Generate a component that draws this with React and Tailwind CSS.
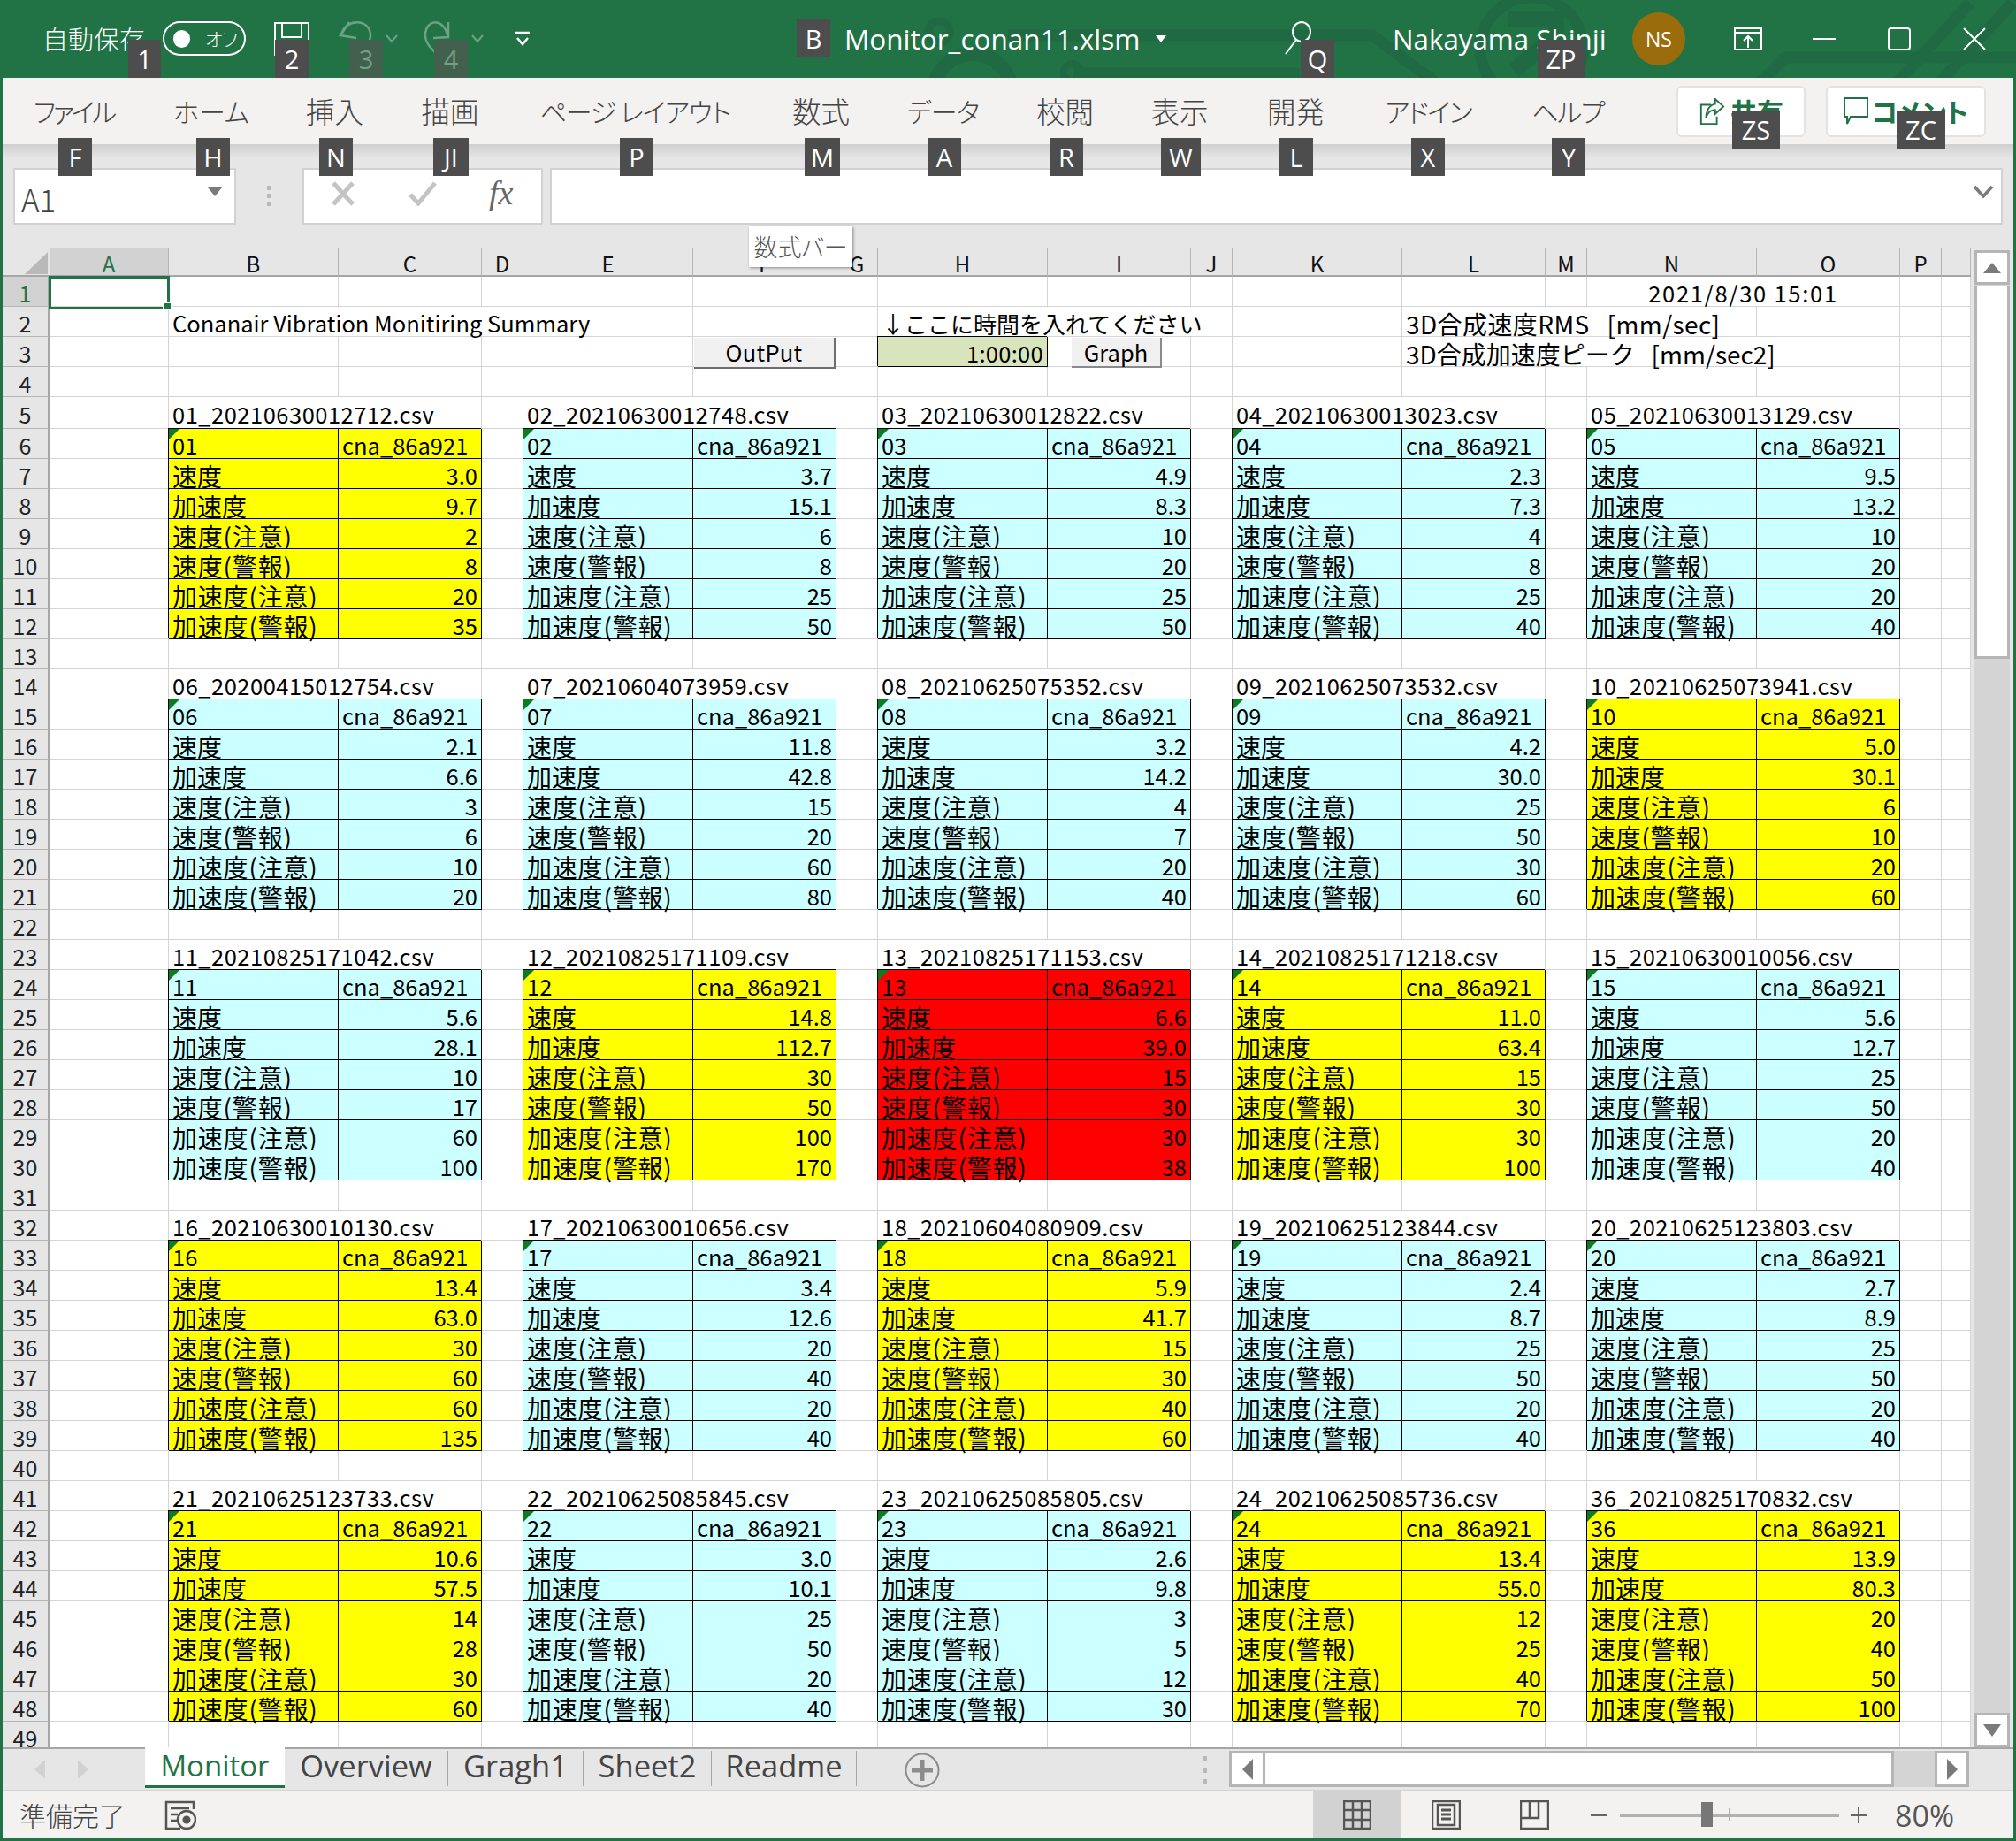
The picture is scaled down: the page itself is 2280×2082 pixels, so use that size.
import React from "react";

const JP = "font-['Noto_Sans_CJK_JP',sans-serif]";
const UI = "font-['Open_Sans','Noto_Sans_CJK_JP',sans-serif]";

const blocks = [
  [5, [
    ["01_20210630012712.csv", "y", ["3.0", "9.7", "2", "8", "20", "35"]],
    ["02_20210630012748.csv", "c", ["3.7", "15.1", "6", "8", "25", "50"]],
    ["03_20210630012822.csv", "c", ["4.9", "8.3", "10", "20", "25", "50"]],
    ["04_20210630013023.csv", "c", ["2.3", "7.3", "4", "8", "25", "40"]],
    ["05_20210630013129.csv", "c", ["9.5", "13.2", "10", "20", "20", "40"]],
  ]],
  [14, [
    ["06_20200415012754.csv", "c", ["2.1", "6.6", "3", "6", "10", "20"]],
    ["07_20210604073959.csv", "c", ["11.8", "42.8", "15", "20", "60", "80"]],
    ["08_20210625075352.csv", "c", ["3.2", "14.2", "4", "7", "20", "40"]],
    ["09_20210625073532.csv", "c", ["4.2", "30.0", "25", "50", "30", "60"]],
    ["10_20210625073941.csv", "y", ["5.0", "30.1", "6", "10", "20", "60"]],
  ]],
  [23, [
    ["11_20210825171042.csv", "c", ["5.6", "28.1", "10", "17", "60", "100"]],
    ["12_20210825171109.csv", "y", ["14.8", "112.7", "30", "50", "100", "170"]],
    ["13_20210825171153.csv", "r", ["6.6", "39.0", "15", "30", "30", "38"]],
    ["14_20210825171218.csv", "y", ["11.0", "63.4", "15", "30", "30", "100"]],
    ["15_20210630010056.csv", "c", ["5.6", "12.7", "25", "50", "20", "40"]],
  ]],
  [32, [
    ["16_20210630010130.csv", "y", ["13.4", "63.0", "30", "60", "60", "135"]],
    ["17_20210630010656.csv", "c", ["3.4", "12.6", "20", "40", "20", "40"]],
    ["18_20210604080909.csv", "y", ["5.9", "41.7", "15", "30", "40", "60"]],
    ["19_20210625123844.csv", "c", ["2.4", "8.7", "25", "50", "20", "40"]],
    ["20_20210625123803.csv", "c", ["2.7", "8.9", "25", "50", "20", "40"]],
  ]],
  [41, [
    ["21_20210625123733.csv", "y", ["10.6", "57.5", "14", "28", "30", "60"]],
    ["22_20210625085845.csv", "c", ["3.0", "10.1", "25", "50", "20", "40"]],
    ["23_20210625085805.csv", "c", ["2.6", "9.8", "3", "5", "12", "30"]],
    ["24_20210625085736.csv", "y", ["13.4", "55.0", "12", "25", "40", "70"]],
    ["36_20210825170832.csv", "y", ["13.9", "80.3", "20", "40", "50", "100"]],
  ]],
];

const LABELS = ["速度", "加速度", "速度(注意)", "速度(警報)", "加速度(注意)", "加速度(警報)"];
const COLS = "ABCDEFGHIJKLMNOP ".split("");
const FILL = { y: "bg-[#ffff00]", c: "bg-[#ccffff]", r: "bg-[#ff0000]" };
const SPAN = { 2: "col-span-2", 3: "col-span-3", 4: "col-span-4" };

function buildCells() {
  const m = {};
  const put = (r, c, v) => (m[r + "," + c] = v);
  put(1, 13, { t: "2021/8/30 15:01", span: 2, kind: "date" });
  put(2, 1, { t: "Conanair Vibration Monitiring Summary", span: 4, kind: "text" });
  put(2, 7, { t: "↓ここに時間を入れてください", span: 3, kind: "label" });
  put(2, 11, { t: "3D合成速度RMS   [mm/sec]", span: 3, kind: "note2" });
  put(3, 11, { t: "3D合成加速度ピーク   [mm/sec2]", span: 4, kind: "note" });
  put(3, 7, { t: "1:00:00", kind: "time" });
  blocks.forEach(([row, tables]) => {
    tables.forEach(([file, color, vals], i) => {
      const c = 1 + i * 3;
      put(row, c, { t: file, span: 2, kind: "file" });
      put(row + 1, c, { t: file.slice(0, 2), kind: "head", fill: color });
      put(row + 1, c + 1, { t: "cna_86a921", kind: "sub", fill: color });
      vals.forEach((v, j) => {
        put(row + 2 + j, c, { t: LABELS[j], kind: j > 1 ? "tlabelp" : "tlabel", fill: color });
        put(row + 2 + j, c + 1, { t: v, kind: "num", fill: color });
      });
    });
  });
  return m;
}

function Cell({ cell }) {
  const base = "min-w-0 whitespace-nowrap border-r border-b ";
  const span = cell.span ? SPAN[cell.span] + " " : "";
  const boxed = "border-black shadow-[-1px_-1px_0_#000] " + (cell.fill ? FILL[cell.fill] : "") + " ";
  switch (cell.kind) {
    case "date":
      return <div className={base + span + "border-[#d4d4d4] flex items-center justify-center pt-1 text-[25.5px] tracking-[1.75px] text-black"}>{cell.t}</div>;
    case "text":
      return <div className={base + span + "border-[#d4d4d4] flex items-center pl-[4px] pt-1 text-[25.5px] text-black"}>{cell.t}</div>;
    case "file":
      return <div className={base + span + "border-[#d4d4d4] flex items-center pl-[4px] pt-1 text-[25.5px] tracking-[0.5px] text-black"}>{cell.t}</div>;
    case "label":
      return <div className={base + span + "border-[#d4d4d4] flex items-center pl-[4px] pt-1 text-[26px] text-black"}>{cell.t}</div>;
    case "note":
      return <div className={base + span + "border-[#d4d4d4] flex items-center pl-[4px] pt-1 text-[28px] whitespace-pre text-black"}>{cell.t}</div>;
    case "note2":
      return <div className={base + span + "border-[#d4d4d4] flex items-center pl-[4px] pt-1 text-[28px] tracking-[0.4px] whitespace-pre text-black"}>{cell.t}</div>;
    case "time":
      return <div className={base + "border-black shadow-[-1px_-1px_0_#000] bg-[#d8e4bc] flex items-center justify-end pr-[4px] pt-1 text-[25.5px] tracking-[0.3px] text-black"}>{cell.t}</div>;
    case "head":
      return (
        <div className={base + boxed + "relative flex items-center pl-[4px] pt-1 text-[25.5px] text-black"}>
          <span className="absolute left-0 top-0 w-3 h-3 bg-[#0b7d20] [clip-path:polygon(0_0,100%_0,0_100%)]" />
          {cell.t}
        </div>
      );
    case "sub":
      return <div className={base + boxed + "flex items-center pl-[4px] pt-1 text-[25.5px] text-black"}>{cell.t}</div>;
    case "tlabel":
      return <div className={base + boxed + "flex items-center pl-[4px] pt-1 text-[28px] text-black"}>{cell.t}</div>;
    case "tlabelp":
      return <div className={base + boxed + "flex items-center pl-[4px] pt-1 text-[28px] tracking-[0.8px] text-black"}>{cell.t}</div>;
    default:
      return <div className={base + boxed + "flex items-center justify-end pr-[4px] pt-1 text-[25.5px] text-black"}>{cell.t}</div>;
  }
}

function Sheet() {
  const m = buildCells();
  const out = [];
  out.push(
    <div key="corner" className="bg-[#e6e6e6] border-b-2 border-[#a6a6a6] relative">
      <span className="absolute left-[25px] top-[5px] w-[26px] h-[25px] bg-[#b9b9b9] [clip-path:polygon(100%_0,100%_100%,0_100%)]" />
    </div>
  );
  COLS.forEach((c, i) =>
    out.push(
      <div
        key={"h" + i}
        className={
          "border-b-2 border-r border-r-[#b5b5b5] border-b-[#a6a6a6] flex items-center justify-center text-[24px] leading-none pt-1 " +
          (i === 0 ? "bg-[#d2d2d2] text-[#217346]" : "bg-[#e6e6e6] text-[#111]")
        }
      >
        {c}
      </div>
    )
  );
  for (let r = 1; r <= 49; r++) {
    out.push(
      <div
        key={"r" + r}
        className={
          "border-b border-r-2 border-r-[#a6a6a6] border-b-[#b5b5b5] flex items-center justify-center text-[25px] leading-none pt-1 " +
          (r === 1 ? "bg-[#d2d2d2] text-[#217346]" : "bg-[#e6e6e6] text-[#222]")
        }
      >
        {r}
      </div>
    );
    let c = 0;
    while (c < COLS.length) {
      const cell = m[r + "," + c];
      if (cell) {
        out.push(<Cell key={r + "-" + c} cell={cell} />);
        c += cell.span || 1;
      } else {
        out.push(<div key={r + "-" + c} className="border-r border-b border-[#d4d4d4]" />);
        c += 1;
      }
    }
  }
  return (
    <div className={"relative w-[2226px] h-[1696px] overflow-hidden bg-white " + JP}>
      <div className="grid grid-cols-[53px_135px_repeat(5,192px_162px_47px)_33px] grid-rows-[33px_repeat(4,34px)_36px_repeat(44,34px)]">
        {out}
      </div>
      {/* form controls floating over the sheet */}
      <div className="absolute left-[782px] top-[102px] w-[160px] h-[35px] bg-[#f0f0f0] border-r-2 border-b-2 border-[#6e6e6e] flex items-center justify-center text-[25.5px] tracking-[0.3px] text-black">OutPut</div>
      <div className="absolute left-[1209px] top-[102px] w-[102px] h-[34px] bg-[#f0f0f0] border-r-2 border-b-2 border-[#8a8a8a] flex items-center justify-center text-[25.5px] text-black">Graph</div>
      {/* active cell */}
      <div className="absolute left-[52px] top-[32px] w-[137px] h-[38px] border-[3px] border-[#217346]" />
      <div className="absolute left-[181px] top-[62px] w-[10px] h-[9px] bg-[#217346] border border-white" />
    </div>
  );
}

const KEYTIPS = [
  ["1", "left-[145px] top-[45px] w-[37px] h-[43px]"],
  ["2", "left-[311px] top-[45px] w-[38px] h-[43px]"],
  ["B", "left-[901px] top-[22px] w-[38px] h-[43px]"],
  ["Q", "left-[1471px] top-[45px] w-[38px] h-[43px]"],
  ["ZP", "left-[1739px] top-[45px] w-[53px] h-[43px]"],
  ["F", "left-[66px] top-[156px] w-[38px] h-[43px]"],
  ["H", "left-[222px] top-[156px] w-[38px] h-[43px]"],
  ["N", "left-[361px] top-[156px] w-[38px] h-[43px]"],
  ["JI", "left-[490px] top-[156px] w-[40px] h-[43px]"],
  ["P", "left-[701px] top-[156px] w-[38px] h-[43px]"],
  ["M", "left-[910px] top-[156px] w-[40px] h-[43px]"],
  ["A", "left-[1049px] top-[156px] w-[38px] h-[43px]"],
  ["R", "left-[1187px] top-[156px] w-[38px] h-[43px]"],
  ["W", "left-[1313px] top-[156px] w-[45px] h-[43px]"],
  ["L", "left-[1447px] top-[156px] w-[38px] h-[43px]"],
  ["X", "left-[1596px] top-[156px] w-[38px] h-[43px]"],
  ["Y", "left-[1755px] top-[156px] w-[38px] h-[43px]"],
  ["ZS", "left-[1959px] top-[125px] w-[54px] h-[43px]"],
  ["ZC", "left-[2145px] top-[125px] w-[55px] h-[43px]"],
];

const RIBBON = [
  ["ファイル", "ml-[35px] w-[91px] text-[30px] tracking-[-3.2px]"],
  ["ホーム", "ml-[69px] w-[82px] text-[30px]"],
  ["挿入", "ml-[66px] w-[65px] text-[32.5px]"],
  ["描画", "ml-[65px] w-[66px] text-[32.5px]"],
  ["ページ レイアウト", "ml-[70px] w-[213px] text-[30px] tracking-[-1.2px]"],
  ["数式", "ml-[71px] w-[65px] text-[32.5px]"],
  ["データ", "ml-[66px] w-[79px] text-[30px] tracking-[-0.8px]"],
  ["校閲", "ml-[66px] w-[65px] text-[32.5px]"],
  ["表示", "ml-[64px] w-[66px] text-[32.5px]"],
  ["開発", "ml-[66px] w-[65px] text-[32.5px]"],
  ["アドイン", "ml-[69px] w-[96px] text-[30px] tracking-[-1.8px]"],
  ["ヘルプ", "ml-[70px] w-[80px] text-[30px] tracking-[-1.5px]"],
];

function TitleBackdrop() {
  return (
    <svg className="absolute inset-0" width="2280" height="88" viewBox="0 0 2280 88" fill="none" stroke="#1f6a42" strokeWidth="13">
      <path d="M1140 40H1552L1622 92" />
      <path d="M1213 83H1470" />
      <circle cx="1213" cy="82" r="10" strokeWidth="8" />
      <circle cx="1732" cy="55" r="58" />
      <path d="M1705 22H1760V40L1712 80" strokeWidth="18" />
      <path d="M1992 92L2019 65H2280" />
      <path d="M2228 3L2147 92M2276 3L2195 92" />
      <circle cx="1100" cy="105" r="44" strokeWidth="16" />
      <circle cx="1062" cy="36" r="12" strokeWidth="9" />
    </svg>
  );
}

function TitleBar() {
  return (
    <div className={"relative h-[88px] shrink-0 bg-[#217346] flex items-center text-white overflow-hidden " + UI}>
      <TitleBackdrop />
      <div className="relative flex items-center pl-[48px] h-full">
        <div className="w-[136px] text-[29px] whitespace-nowrap font-['Noto_Sans_CJK_JP',sans-serif] font-light">自動保存</div>
        <div className="w-[94px] h-[39px] rounded-full border-2 border-white flex items-center pl-[10px] mb-[1px]">
          <span className="w-[19px] h-[20px] rounded-full bg-white" />
          <span className="ml-[17px] text-[21px] font-['Noto_Sans_CJK_JP',sans-serif] font-light [font-feature-settings:'palt']">オフ</span>
        </div>
        <svg className="ml-[32px]" width="40" height="40" viewBox="0 0 40 40" fill="none" stroke="#fff" strokeWidth="2">
          <path d="M1 2H39V38H1Z" />
          <path d="M9 2V18H31V2" />
        </svg>
        <svg className="ml-[33px]" width="38" height="44" viewBox="0 0 38 44" fill="none" stroke="#6ea285" strokeWidth="2.5">
          <path d="M12 3L2 18L20 21" />
          <path d="M3 17C8 -2 36 -1 36 18C36 30 22 38 14 46" />
        </svg>
        <svg className="ml-[15px]" width="14" height="10" viewBox="0 0 14 10" fill="none" stroke="#6ea285" strokeWidth="2"><path d="M1 1L7 8L13 1" /></svg>
        <svg className="ml-[30px]" width="38" height="44" viewBox="0 0 38 44" fill="none" stroke="#6ea285" strokeWidth="2.5">
          <path d="M27 3V20L10 21" />
          <path d="M26 18C22 -2 1 -1 1 18C1 30 14 38 22 46" />
        </svg>
        <svg className="ml-[15px]" width="14" height="10" viewBox="0 0 14 10" fill="none" stroke="#6ea285" strokeWidth="2"><path d="M1 1L7 8L13 1" /></svg>
        <svg className="ml-[36px]" width="16" height="18" viewBox="0 0 16 18" fill="none" stroke="#fff" strokeWidth="2.5">
          <path d="M0 2H16" />
          <path d="M2 8L8 15L14 8" />
        </svg>
        <div className="ml-[356px] w-[345px] text-[31.5px] whitespace-nowrap">Monitor_conan11.xlsm</div>
        <svg className="ml-[7px]" width="12" height="8" viewBox="0 0 12 8"><path d="M0 0H12L6 8Z" fill="#fff" /></svg>
        <svg className="ml-[134px] -mt-[2px]" width="30" height="38" viewBox="0 0 30 38" fill="none" stroke="#fff" strokeWidth="2">
          <ellipse cx="19" cy="12" rx="10" ry="11" />
          <path d="M13 21L1 37" />
        </svg>
        <div className="ml-[92px] w-[260px] text-[31.3px] whitespace-nowrap">Nakayama Shinji</div>
        <div className="ml-[11px] w-[60px] h-[60px] rounded-full bg-[#9a6c0b] flex items-center justify-center text-[23px]">NS</div>
        <svg className="ml-[55px]" width="32" height="26" viewBox="0 0 32 26" fill="none" stroke="#fff" strokeWidth="2">
          <path d="M1 1H31V25H1Z" />
          <path d="M1 6H31" />
          <path d="M16 23V11M11 15L16 10L21 15" />
        </svg>
        <svg className="ml-[57px]" width="26" height="4" viewBox="0 0 26 4"><path d="M0 2H26" stroke="#fff" strokeWidth="2" /></svg>
        <svg className="ml-[59px]" width="26" height="26" viewBox="0 0 26 26" fill="none" stroke="#fff" strokeWidth="2"><rect x="1" y="1" width="24" height="24" rx="3" /></svg>
        <svg className="ml-[59px]" width="26" height="26" viewBox="0 0 26 26" fill="none" stroke="#fff" strokeWidth="2"><path d="M1 1L25 25M25 1L1 25" /></svg>
      </div>
    </div>
  );
}

function RibbonTabs() {
  return (
    <div className={"h-[75px] shrink-0 bg-[#f3f2f1] flex items-center text-[#444] " + JP}>
      {RIBBON.map(([t, c]) => (
        <div key={t} className={c + " flex justify-center whitespace-nowrap font-light [font-feature-settings:'palt']"}>{t}</div>
      ))}
      <div className="ml-[83px] w-[146px] h-[58px] bg-white border-2 border-[#e3e3e3] rounded-md flex items-center justify-center gap-[6px] text-[#217346] text-[30px] font-bold">
        <svg width="30" height="30" viewBox="0 0 30 32" fill="none" stroke="#217346" strokeWidth="2">
          <path d="M14 8H2V31H21V22" />
          <path d="M19 1L29 10L19 19V14C13 14 10 17 8 24C8 15 12 8 19 7Z" />
        </svg>
        <span>共有</span>
      </div>
      <div className="ml-[23px] w-[181px] h-[58px] bg-white border-2 border-[#e3e3e3] rounded-md flex items-center justify-center gap-[4px] text-[#217346] text-[30px] font-bold [font-feature-settings:'palt']">
        <svg width="28" height="32" viewBox="0 0 28 32" fill="none" stroke="#217346" strokeWidth="2">
          <path d="M1 1H27V22H8L4 30V22H1Z" />
        </svg>
        <span>コメント</span>
      </div>
    </div>
  );
}

function FormulaBar() {
  return (
    <div className={"relative h-[117px] shrink-0 bg-[#e6e6e6] flex pt-[27px] pl-[12px] " + JP}>
      <div className="absolute left-0 right-0 top-0 h-[16px] bg-gradient-to-b from-[#cfcfcf] to-[#e6e6e6]" />
      <div className="relative w-[252px] h-[64px] bg-white border-2 border-[#d2d2d2] flex items-center justify-between pl-[7px] pr-[14px] text-[#444] text-[35px] font-light">
        <span className="mt-[6px]">A1</span>
        <svg width="16" height="10" viewBox="0 0 16 10" className="-mt-[10px]"><path d="M0 0H16L8 10Z" fill="#7a7a7a" /></svg>
      </div>
      <div className="relative w-[75px] h-[64px] flex items-center justify-center">
        <svg width="6" height="24" viewBox="0 0 6 24" fill="#b8b8b8"><rect x="0" width="5" height="5" /><rect x="0" y="9" width="5" height="5" /><rect x="0" y="18" width="5" height="5" /></svg>
      </div>
      <div className="relative w-[272px] h-[64px] bg-white border-2 border-[#d2d2d2] flex items-center">
        <svg className="ml-[30px] -mt-[6px]" width="28" height="30" viewBox="0 0 28 30" fill="none" stroke="#c4c4c4" strokeWidth="5"><path d="M3 3L25 27M25 3L3 27" /></svg>
        <svg className="ml-[60px] -mt-[6px]" width="32" height="28" viewBox="0 0 32 28" fill="none" stroke="#c4c4c4" strokeWidth="5"><path d="M2 15L11 25L30 2" /></svg>
        <span className="ml-[59px] -mt-[8px] font-['Liberation_Serif',serif] italic text-[38px] text-[#666] leading-none">fx</span>
      </div>
      <div className="relative ml-[8px] w-[1643px] h-[64px] bg-white border-2 border-[#d2d2d2] flex items-center justify-end pr-[8px]">
        <svg width="24" height="16" viewBox="0 0 24 16" fill="none" stroke="#7a7a7a" strokeWidth="3.5" className="-mt-[10px]"><path d="M2 2L12 13L22 2" /></svg>
      </div>
    </div>
  );
}

function VScroll() {
  return (
    <div className="w-[48px] h-[1696px] bg-[#e6e6e6] flex flex-col pt-[3px] pl-[4px] pr-[4px]">
      <div className="h-[39px] bg-white border-[3px] border-[#b5b5b5] flex items-center justify-center">
        <svg width="20" height="12" viewBox="0 0 20 12"><path d="M10 0L20 12H0Z" fill="#7a7a7a" /></svg>
      </div>
      <div className="flex-1 bg-[#d4d4d4] pt-[2px]">
        <div className="h-[421px] bg-white border-x-[3px] border-b-[3px] border-[#b5b5b5]" />
      </div>
      <div className="h-[39px] bg-white border-[3px] border-[#b5b5b5] flex items-center justify-center">
        <svg width="20" height="14" viewBox="0 0 20 14"><path d="M10 14L20 0H0Z" fill="#7a7a7a" /></svg>
      </div>
    </div>
  );
}

function TabBar() {
  const tabs = [
    ["Overview", "w-[185px]"],
    ["Gragh1", "w-[153px]"],
    ["Sheet2", "w-[145px]"],
    ["Readme", "w-[164px]"],
  ];
  return (
    <div className={"h-[48px] shrink-0 bg-[#e6e6e6] border-t-2 border-[#a6a6a6] flex " + UI}>
      <div className="w-[161px] flex items-center pl-[36px] gap-[37px]">
        <svg width="12" height="22" viewBox="0 0 12 22"><path d="M12 0V22L0 11Z" fill="#d2d2d2" /></svg>
        <svg width="12" height="22" viewBox="0 0 12 22"><path d="M0 0V22L12 11Z" fill="#d2d2d2" /></svg>
      </div>
      <div className="w-[158px] -mt-[2px] h-[46px] bg-white border-b-[3px] border-[#217346] flex items-center justify-center text-[#217346] text-[33px] leading-none pb-[3px]">Monitor</div>
      {tabs.map(([t, w]) => (
        <div key={t} className={w + " h-[40px] mt-[2px] border-r border-[#a6a6a6] flex items-center justify-center text-[#444] text-[34.5px] leading-none pb-[5px]"}>{t}</div>
      ))}
      <svg className="ml-[54px] mt-[4px]" width="40" height="40" viewBox="0 0 40 40" fill="none" stroke="#8c8c8c">
        <circle cx="20" cy="20" r="18.5" strokeWidth="2" />
        <path d="M20 8V32M8 20H32" strokeWidth="5" />
      </svg>
      <svg className="ml-[297px] mt-[8px]" width="6" height="32" viewBox="0 0 6 32" fill="#b8b8b8"><rect width="5" height="6" /><rect y="13" width="5" height="6" /><rect y="26" width="5" height="6" /></svg>
      <div className="ml-[24px] mt-[2px] w-[837px] h-[41px] flex bg-[#d4d4d4]">
        <div className="w-[41px] bg-white border-[3px] border-[#b5b5b5] flex items-center justify-center">
          <svg width="12" height="24" viewBox="0 0 12 24"><path d="M12 0V24L0 12Z" fill="#7a7a7a" /></svg>
        </div>
        <div className="w-[711px] bg-white border-y-[3px] border-r-[3px] border-[#b5b5b5]" />
        <div className="flex-1" />
        <div className="w-[39px] bg-white border-[3px] border-[#b5b5b5] flex items-center justify-center">
          <svg width="12" height="24" viewBox="0 0 12 24"><path d="M0 0V24L12 12Z" fill="#7a7a7a" /></svg>
        </div>
      </div>
    </div>
  );
}

function StatusBar() {
  return (
    <div className={"h-[55px] shrink-0 bg-[#f3f2f1] border-t-2 border-[#d2d2d2] flex items-center text-[#444] " + JP}>
      <div className="ml-[19px] w-[164px] text-[30px] font-light whitespace-nowrap">準備完了</div>
      <svg width="36" height="34" viewBox="0 0 36 34" fill="none" stroke="#555" strokeWidth="2.5">
        <path d="M33 10V2H2V32H18" />
        <path d="M7 9H28M7 16H15M7 23H15" />
        <circle cx="25" cy="22" r="10" />
        <circle cx="25" cy="22" r="4.5" fill="#555" stroke="none" />
      </svg>
      <div className="ml-[1263px] w-[100px] h-[53px] bg-[#d2d2d2] flex items-center justify-center">
        <svg width="32" height="33" viewBox="0 0 32 33" fill="none" stroke="#555" strokeWidth="2.5"><path d="M1 1H31V32H1ZM1 11H31M1 22H31M11 1V32M21 1V32" /></svg>
      </div>
      <div className="w-[100px] flex items-center justify-center">
        <svg width="33" height="33" viewBox="0 0 33 33" fill="none" stroke="#555" strokeWidth="2.5"><path d="M1 1H32V32H1ZM7 5H26V28H7Z" /><path d="M11 11H22M11 16H22M11 21H22" strokeWidth="3" /></svg>
      </div>
      <div className="w-[100px] flex items-center justify-center">
        <svg width="33" height="33" viewBox="0 0 33 33" fill="none" stroke="#555" strokeWidth="2.5"><path d="M1 1H32V32H1ZM1 20H21V1M11 1V20" /></svg>
      </div>
      <svg className="ml-[14px]" width="18" height="4" viewBox="0 0 18 4"><path d="M0 2H18" stroke="#666" strokeWidth="2" /></svg>
      <div className="relative ml-[15px] w-[248px] h-[4px] bg-[#b0b0b0]">
        <span className="absolute left-[92px] -top-[13px] w-[13px] h-[28px] bg-[#777]" />
        <span className="absolute left-[123px] -top-[6px] w-[2px] h-[14px] bg-[#b0b0b0]" />
      </div>
      <svg className="ml-[13px]" width="18" height="18" viewBox="0 0 18 18"><path d="M0 9H18M9 0V18" stroke="#666" strokeWidth="2" /></svg>
      <div className={"ml-[32px] text-[34px] leading-none text-[#555] " + UI}>80%</div>
    </div>
  );
}

export default function App() {
  return (
    <div className={"relative w-[2280px] h-[2082px] overflow-hidden bg-[#217346] flex flex-col " + JP}>
      <TitleBar />
      <div className="mx-[3px] flex flex-col">
        <RibbonTabs />
        <FormulaBar />
        <div className="flex">
          <Sheet />
          <VScroll />
        </div>
        <TabBar />
        <StatusBar />
      </div>

      {KEYTIPS.map(([t, c]) => (
        <div key={t} className={"absolute " + c + " bg-[#4d4d4d] text-white flex items-center justify-center text-[29px] leading-none " + UI}>{t}</div>
      ))}
      <div className={"absolute left-[395px] top-[45px] w-[38px] h-[43px] bg-[#43604f] text-[#74a088] flex items-center justify-center text-[29px] leading-none " + UI}>3</div>
      <div className={"absolute left-[491px] top-[45px] w-[38px] h-[43px] bg-[#43604f] text-[#74a088] flex items-center justify-center text-[29px] leading-none " + UI}>4</div>
      <div className="absolute left-[847px] top-[256px] w-[117px] h-[46px] bg-white shadow-[1px_1px_3px_rgba(0,0,0,0.4)] flex items-center justify-center text-[27px] font-light text-[#555] whitespace-nowrap [font-feature-settings:'palt']">数式バー</div>
    </div>
  );
}
